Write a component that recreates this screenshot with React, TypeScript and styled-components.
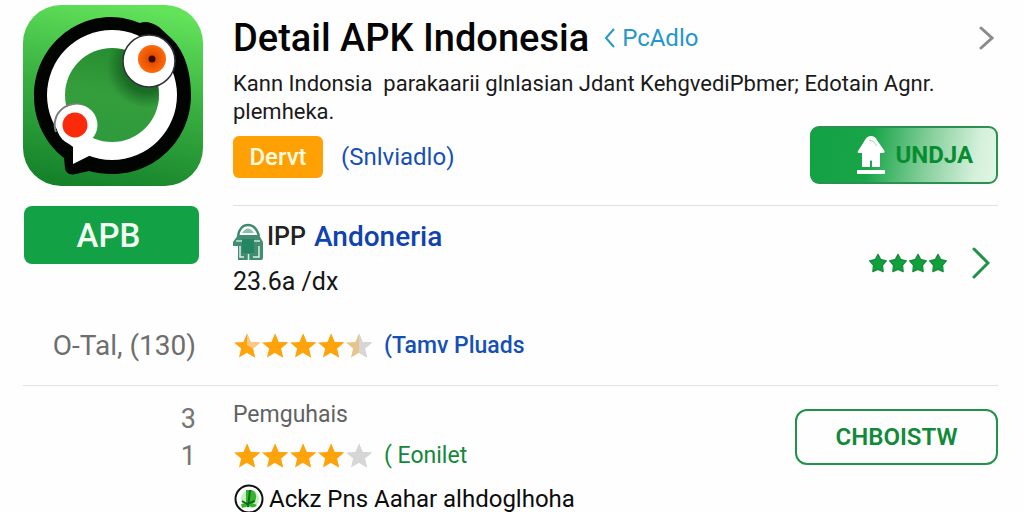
import React from "react";
import styled, { createGlobalStyle } from "styled-components";

const GlobalStyle = createGlobalStyle`
  * { box-sizing: border-box; }
  html { overflow-x: hidden; }
  body {
    margin: 0;
    background: #fefefe;
    color: #111;
    font-family: Roboto, "Liberation Sans", sans-serif;
  }
  h1, h2, p { margin: 0; font-weight: 400; }
  a { text-decoration: none; }
  button { font-family: inherit; cursor: pointer; padding: 0; }
  svg { display: block; flex: none; }
`;

const Page = styled.main`
  padding: 5px 26px 0 23px;
`;

const Section = styled.section<{ $ruled?: boolean }>`
  display: grid;
  grid-template-columns: 180px minmax(0, 1fr);
  column-gap: 30px;
  border-bottom: ${(p) => (p.$ruled ? "1px solid #dfe1e6" : "none")};
  padding-bottom: ${(p) => (p.$ruled ? "24px" : "0")};
`;

const Side = styled.div`
  display: flex;
  flex-direction: column;
`;

const Content = styled.div`
  display: flex;
  flex-direction: column;
  min-width: 0;
`;

const InstallButton = styled.button`
  height: 58px;
  margin: 20px 4px 0 1px;
  border: 0;
  border-radius: 8px;
  background: #13a145;
  color: #f4fff4;
  font-size: 33px;
  font-weight: 500;
  padding-right: 6px;
`;

const Count = styled.p`
  margin-top: 67px;
  padding-right: 7px;
  text-align: right;
  font-size: 28px;
  line-height: 30px;
  color: #6e6e6e;
  white-space: nowrap;
`;

const Header = styled.header`
  display: flex;
  align-items: center;
  height: 65px;
`;

const Title = styled.h1`
  font-size: 38px;
  line-height: 46px;
  font-weight: 500;
  color: #050505;
  white-space: nowrap;
`;

const TextLink = styled.a<{ $color: string; $size?: number; $weight?: number }>`
  color: ${(p) => p.$color};
  font-size: ${(p) => p.$size ?? 24}px;
  font-weight: ${(p) => p.$weight ?? 400};
  line-height: 30px;
  white-space: nowrap;
`;

const BackLink = styled(TextLink)`
  display: flex;
  align-items: center;
  gap: 7px;
  margin-left: 15px;
`;

const MoreLink = styled.a`
  margin-left: auto;
  padding-right: 4px;
`;

const Description = styled.p`
  font-size: 22px;
  line-height: 28px;
  color: #1a1a1a;
  white-space: pre-wrap;
`;

const Actions = styled.div`
  display: flex;
  align-items: center;
  padding-bottom: 21px;
  border-bottom: 1px solid #dfe1e4;
`;

const Tags = styled.div`
  display: flex;
  align-items: center;
  gap: 18px;
  padding-top: 4px;
`;

const Badge = styled.button`
  width: 90px;
  height: 42px;
  border: 0;
  border-radius: 6px;
  background: #ffa005;
  color: #fffbe0;
  font-size: 24px;
  font-weight: 500;
`;

const DownloadButton = styled.button`
  display: flex;
  align-items: center;
  justify-content: flex-end;
  gap: 10px;
  width: 188px;
  height: 58px;
  margin-left: auto;
  padding-right: 23px;
  border: 2px solid #2a9150;
  border-left-color: #13a145;
  border-radius: 9px;
  background: linear-gradient(100deg, #13a145 0%, #18a548 32%, #86cf9c 62%, #d4f0da 88%, #e2f6e5 100%);
  color: #078d30;
  font-size: 24px;
  font-weight: 700;
`;

const AppRow = styled.div`
  display: flex;
  align-items: center;
  justify-content: space-between;
  padding-top: 16px;
`;

const AppInfo = styled.div`
  display: flex;
  flex-direction: column;
  gap: 7px;
  padding-bottom: 7px;
`;

const AppName = styled.h2`
  display: flex;
  height: 38px;
  font-size: 25px;
  line-height: 30px;
  font-weight: 500;
  color: #222;

  svg { margin-right: 4px; }
  a { margin-left: 8px; }
`;

const Size = styled.p`
  font-size: 25px;
  line-height: 30px;
  color: #161616;
`;

const Score = styled.a`
  display: flex;
  align-items: center;
  gap: 25px;
  padding-right: 8px;
`;

const StarRow = styled.div<{ $gap: number }>`
  display: flex;
  gap: ${(p) => p.$gap}px;
`;

const RatingRow = styled.div<{ $top: number }>`
  display: flex;
  align-items: center;
  gap: 12px;
  height: 30px;
  margin-top: ${(p) => p.$top}px;
  padding-left: 1px;
`;

const Numbers = styled.div`
  padding: 15px 7px 0 0;
  text-align: right;
  font-size: 27px;
  line-height: 37px;
  color: #757575;
`;

const ReviewRow = styled.div`
  display: flex;
  justify-content: space-between;
  align-items: flex-start;
`;

const Reviews = styled.div`
  padding-top: 14px;
`;

const Label = styled.p`
  font-size: 23px;
  line-height: 30px;
  color: #626262;
`;

const OutlineButton = styled.button`
  width: 203px;
  height: 56px;
  margin-top: 23px;
  border: 2px solid #22924a;
  border-radius: 12px;
  background: #fefefe;
  color: #118a39;
  font-size: 24px;
  font-weight: 600;
`;

const Publisher = styled.p`
  display: flex;
  align-items: center;
  gap: 5px;
  height: 30px;
  margin-top: 13px;
  padding-left: 1px;
  font-size: 24px;
  line-height: 30px;
  color: #0c0c0c;
  white-space: nowrap;
`;

const STAR = "M13 0.5 L16.6 9 L26 9.6 L18.9 15.6 L21 24.5 L13 19.8 L5 24.5 L7.1 15.6 L0 9.6 L9.4 9 Z";

type Tone = "full" | "late" | "early" | "empty";

function Star({ tone }: { tone: Tone }) {
  const left = tone === "empty" ? "#d6d6d6" : tone === "early" ? "#e8c48c" : "#ffa30d";
  const right = tone === "full" ? "#ffa30d" : tone === "late" ? "#fbc98a" : "#d6d6d6";
  return (
    <svg width="26" height="26" viewBox="0 0 26 26" aria-hidden="true">
      <path d={STAR} fill={left} />
      <path d="M13 0.5 L16.6 9 L26 9.6 L18.9 15.6 L21 24.5 L13 19.8 Z" fill={right} />
      {tone === "late" && <path d="M13 12 L18.9 15.6 L21 24.5 L13 19.8 Z" fill="#ffa30d" />}
    </svg>
  );
}

function Stars({ tones }: { tones: Tone[] }) {
  return (
    <StarRow $gap={2} role="img" aria-label="4 / 5">
      {tones.map((tone, i) => (
        <Star key={i} tone={tone} />
      ))}
    </StarRow>
  );
}

function GreenStars() {
  return (
    <StarRow $gap={2} role="img" aria-label="4">
      {[0, 1, 2, 3].map((i) => (
        <svg key={i} width="18" height="20" viewBox="-1 -1 28 28" preserveAspectRatio="none" aria-hidden="true">
          <path
            d="M13 1 L17 8 L26 10 L20 16 L21 25 L13 22 L5 25 L6 16 L0 10 L9 8 Z"
            fill="#0fa03c"
            stroke="#168c3c"
            strokeWidth="2"
            strokeLinejoin="round"
          />
        </svg>
      ))}
    </StarRow>
  );
}

function AppIcon() {
  return (
    <svg width="180" height="181" viewBox="0 0 180 181" aria-hidden="true">
      <defs>
        <linearGradient id="tile" x1="0.6" y1="0" x2="0.4" y2="1">
          <stop offset="0" stopColor="#62e35a" />
          <stop offset="0.5" stopColor="#38ae40" />
          <stop offset="1" stopColor="#16832b" />
        </linearGradient>
        <linearGradient id="disc" x1="0.6" y1="0" x2="0.4" y2="1">
          <stop offset="0" stopColor="#268c31" />
          <stop offset="0.5" stopColor="#359e3c" />
          <stop offset="1" stopColor="#2d9a3c" />
        </linearGradient>
        <radialGradient id="shade">
          <stop offset="0.6" stopColor="#0c4f18" stopOpacity="0.6" />
          <stop offset="1" stopColor="#0c4f18" stopOpacity="0" />
        </radialGradient>
        <radialGradient id="iris">
          <stop offset="0.25" stopColor="#e04c00" />
          <stop offset="1" stopColor="#ff6a0a" />
        </radialGradient>
        <clipPath id="discClip">
          <circle cx="89" cy="90" r="47" />
        </clipPath>
      </defs>
      <rect width="180" height="181" rx="38" fill="url(#tile)" />
      <path
        d="M88 12 C99 12 109 15 117 18 Q125 15 136 22 L149 34 C163 48 168 70 168 90 C168 134 133 169 90 169 C80 169 73 168 66 166 L53 169 Q43 171 42 163 L41 153 C23 139 11 117 11 91 C11 47 46 12 88 12 Z"
        fill="#020402"
      />
      <circle cx="89" cy="90" r="65" fill="#fff" />
      <path d="M50 137 V159 L68 150 L78 140 Z" fill="#fff" />
      <circle cx="89" cy="90" r="47" fill="url(#disc)" />
      <circle cx="124" cy="63" r="40" fill="url(#shade)" clipPath="url(#discClip)" />
      <circle cx="126" cy="56" r="26" fill="#fff" stroke="#30343a" strokeWidth="1.5" />
      <circle cx="129" cy="54" r="14" fill="url(#iris)" />
      <circle cx="129" cy="54" r="3.5" fill="#3b0a00" />
      <path d="M33 127 A20.5 20.5 0 0 1 64 103" fill="none" stroke="#7d8080" strokeWidth="2" />
      <circle cx="54" cy="120" r="20.5" fill="#fff" />
      <circle cx="52" cy="120" r="12.5" fill="#fb2a0b" />
    </svg>
  );
}

function Chevron({ color, width, height, stroke }: { color: string; width: number; height: number; stroke: number }) {
  return (
    <svg width={width} height={height} viewBox={`0 0 ${width} ${height}`} fill="none" aria-hidden="true">
      <path
        d={`M2 2 L${width - 2} ${height / 2} L2 ${height - 2}`}
        stroke={color}
        strokeWidth={stroke}
        strokeLinecap="round"
      />
    </svg>
  );
}

export default function App() {
  return (
    <>
      <GlobalStyle />
      <Page>
        <Section $ruled>
          <Side>
            <AppIcon />
            <InstallButton type="button">APB</InstallButton>
            <Count>O-Tal, (130)</Count>
          </Side>
          <Content>
            <Header>
              <Title>Detail APK Indonesia</Title>
              <BackLink href="#developer" $color="#2497cb">
                <svg width="11" height="20" viewBox="0 0 11 20" fill="none" aria-hidden="true">
                  <path d="M10 1 L2 10 L10 19" stroke="#2497cb" strokeWidth="2" />
                </svg>
                PcAdlo
              </BackLink>
              <MoreLink href="#more" aria-label="Detail">
                <Chevron color="#8b8b8b" width={15} height={24} stroke={3} />
              </MoreLink>
            </Header>
            <Description>
              {"Kann Indonsia  parakaarii glnlasian Jdant KehgvediPbmer; Edotain Agnr. plemheka."}
            </Description>
            <Actions>
              <Tags>
                <Badge type="button">Dervt</Badge>
                <TextLink href="#category" $color="#1650b4">
                  (Snlviadlo)
                </TextLink>
              </Tags>
              <DownloadButton type="button">
                <svg width="28" height="38" viewBox="0 0 28 38" aria-hidden="true">
                  <path
                    d="M14 0 Q18 0 20 4 L27.500 15 Q28 17 26 17 H23 V31 H15 V25 Q14 23.500 13 25 V31 H5 V17 H2 Q0 17 1 15 L8 4 Q10 0 14 0 Z"
                    fill="#fff"
                  />
                  <path d="M12 4 Q17 4 20 10" fill="none" stroke="#9fd8ae" strokeWidth="1" />
                  <rect x="0" y="34" width="28" height="4" rx="1" fill="#fff" />
                </svg>
                UNDJA
              </DownloadButton>
            </Actions>
            <AppRow>
              <AppInfo>
                <AppName>
                  <svg width="30" height="38" viewBox="0 0 30 38" aria-hidden="true">
                    <path d="M5 14 C6 7 10 3 15 3 C20 3 24 7 26 14" fill="none" stroke="#3f8a6c" strokeWidth="2.500" />
                    <path d="M9 11 Q15 2 21 11 Z" fill="#8cbfa8" />
                    <path d="M5 13 H26 L30 20 V36 Q30 38 28 38 H5 V24 H0 V20 Z" fill="#428d70" />
                    <path d="M3 19 H9 M20 19 H27" stroke="#c9e4d8" strokeWidth="1.500" />
                    <path d="M7 24 V35 H11 M26 24 V35 H20 M15.500 32 V38" fill="none" stroke="#dcefe7" strokeWidth="1.500" />
                    <rect x="9" y="17" width="12" height="14" fill="#238562" />
                  </svg>
                  IPP
                  <TextLink href="#app" $color="#0f43ae" $size={28} $weight={500}>
                    Andoneria
                  </TextLink>
                </AppName>
                <Size>23.6a /dx</Size>
              </AppInfo>
              <Score href="#score">
                <GreenStars />
                <Chevron color="#1e9246" width={18} height={32} stroke={3} />
              </Score>
            </AppRow>
            <RatingRow $top={27}>
              <Stars tones={["late", "full", "full", "full", "early"]} />
              <TextLink href="#ratings" $color="#1650b4" $size={23} $weight={500}>
                (Tamv Pluads
              </TextLink>
            </RatingRow>
          </Content>
        </Section>
        <Section>
          <Numbers>
            <p>3</p>
            <p>1</p>
          </Numbers>
          <ReviewRow>
            <Reviews>
              <Label>Pemguhais</Label>
              <RatingRow $top={11}>
                <Stars tones={["full", "full", "full", "full", "empty"]} />
                <TextLink href="#reviews" $color="#14883a" $size={23}>
                  ( Eonilet
                </TextLink>
              </RatingRow>
              <Publisher>
                <svg width="30" height="30" viewBox="0 0 30 30" aria-hidden="true">
                  <circle cx="15" cy="15" r="13.500" fill="#fff" stroke="#111" strokeWidth="2" />
                  <circle cx="16" cy="15" r="9" fill="#c5f0c0" />
                  <path d="M12 6 H18 Q23 8 22 14 Q22 18 18 19 L23 21 Q20 25 15 22 L8 24 L7 20 L12 19 Z" fill="#35b32e" />
                  <path d="M16 6 L14 23 M8 17 L13 20 L21 17" fill="none" stroke="#0b6e14" strokeWidth="2" />
                </svg>
                Ackz Pns Aahar alhdoglhoha
              </Publisher>
            </Reviews>
            <OutlineButton type="button">CHBOISTW</OutlineButton>
          </ReviewRow>
        </Section>
      </Page>
    </>
  );
}
